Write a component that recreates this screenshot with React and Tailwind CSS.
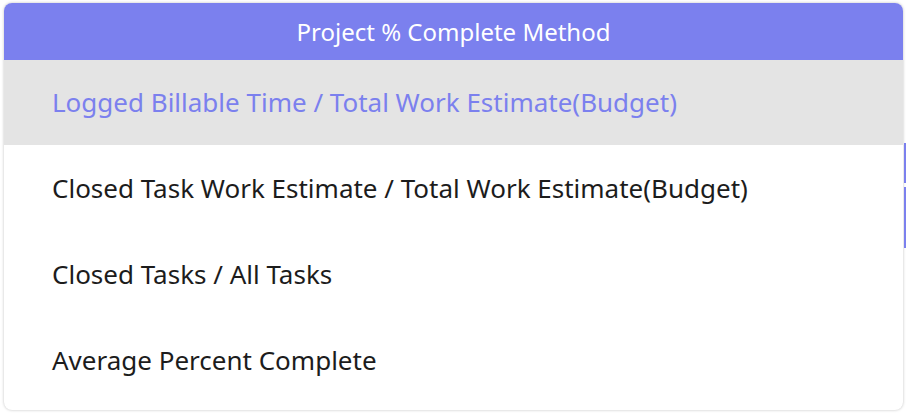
import React from "react"

const options = [
  "Logged Billable Time / Total Work Estimate(Budget)",
  "Closed Task Work Estimate / Total Work Estimate(Budget)",
  "Closed Tasks / All Tasks",
  "Average Percent Complete"
]

export default function App() {
  const selected = 0

  return (
    <div
      className="flex h-[414px] w-[906px] bg-white"
      style={{ fontFamily: '"Noto Sans", "Open Sans", sans-serif' }}
    >
      <div className="pl-[4px] pt-[3px]">
        <div className="w-[899px] h-[407px] rounded-[8px] bg-white shadow-[0_0_3px_rgba(0,0,0,0.25)] overflow-hidden flex flex-col">
          <div className="h-[57px] bg-[#7b80ee] flex items-center justify-center text-white text-[24px]">
            Project % Complete Method
          </div>
          {options.map((label, i) => (
            <div
              key={label}
              className={
                i === selected
                  ? "h-[85px] flex items-center pl-[48px] text-[26px] bg-[#e4e4e4] text-[#7b80ee]"
                  : "h-[86px] flex items-center pl-[48px] text-[26px] text-[#1c1c1c]"
              }
            >
              {label}
            </div>
          ))}
        </div>
      </div>
      <div className="flex flex-col pt-[143px] gap-[4px] pl-px">
        <div className="w-[2px] h-[40px] bg-[#7b80ee]" />
        <div className="w-[2px] h-[61px] bg-[#7b80ee]" />
      </div>
    </div>
  )
}
